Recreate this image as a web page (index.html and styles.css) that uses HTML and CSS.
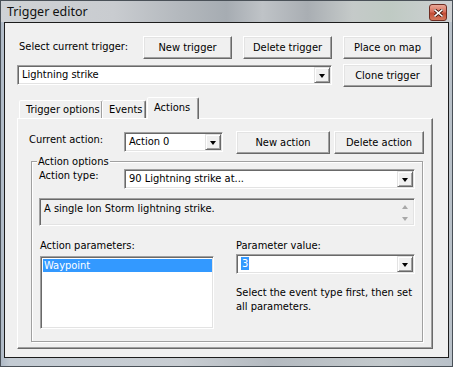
FILE: index.html
```html
<!DOCTYPE html>
<html lang="en">
<head>
  <meta charset="UTF-8" />
  <title>Trigger editor</title>
  <link rel="stylesheet" href="styles.css">
</head>
<body>
  <div class="window">
    <!-- Title bar -->
    <div class="titlebar">
      <span class="title">Trigger editor</span>
      <span class="close">
        <svg width="9" height="8" viewBox="0 0 9 8"><path d="M1 1 L8 7 M8 1 L1 7" stroke="#3a1208" stroke-width="3.2" stroke-linecap="square"/><path d="M1 1 L8 7 M8 1 L1 7" stroke="#fff" stroke-width="1.6" stroke-linecap="square"/></svg>
      </span>
    </div>

    <div class="client">
      <!-- Trigger selection -->
      <div class="row row-top">
        <span class="label label-trigger">Select current trigger:</span>
        <button class="btn">New trigger</button>
        <button class="btn">Delete trigger</button>
        <button class="btn">Place on map</button>
      </div>
      <div class="row row-second">
        <div class="combo combo-trigger">
          <span class="combo-text">Lightning strike</span>
          <span class="combo-arrow"></span>
        </div>
        <button class="btn">Clone trigger</button>
      </div>

      <!-- Tabs -->
      <div class="tabs">
        <span class="tab tab-first">Trigger options</span>
        <span class="tab tab-events">Events</span>
        <span class="tab tab-active">Actions</span>
      </div>
      <div class="panel">
        <div class="row row-action">
          <span class="label label-action">Current action:</span>
          <div class="combo combo-action">
            <span class="combo-text">Action 0</span>
            <span class="combo-arrow"></span>
          </div>
          <button class="btn btn-new-action">New action</button>
          <button class="btn btn-delete-action">Delete action</button>
        </div>

        <fieldset class="group">
          <legend>Action options</legend>
          <div class="row row-type">
            <span class="label label-type">Action type:</span>
            <div class="combo combo-type">
              <span class="combo-text">90 Lightning strike at...</span>
              <span class="combo-arrow"></span>
            </div>
          </div>
          <div class="description">
            <span class="description-text">A single Ion Storm lightning strike.</span>
            <span class="scroll">
              <span class="scroll-up"></span>
              <span class="scroll-down"></span>
            </span>
          </div>
          <div class="params">
            <div class="params-left">
              <span class="label">Action parameters:</span>
              <ul class="listbox">
                <li class="selected">Waypoint</li>
              </ul>
            </div>
            <div class="params-right">
              <span class="label">Parameter value:</span>
              <div class="combo combo-value">
                <span class="combo-text"><span class="highlight">3</span></span>
                <span class="combo-arrow"></span>
              </div>
              <p class="hint">Select the event type first, then set all parameters.</p>
            </div>
          </div>
        </fieldset>
      </div>
    </div>
  </div>
</body>
</html>
```

FILE: styles.css
```css
/* Window frame */
body {
  margin: 0;
  font-family: 'DejaVu Sans', sans-serif;
  font-stretch: condensed;
  font-size: 11px;
  color: #000;
  background: #b8c0c8;
}
.window {
  width: 453px;
  height: 367px;
  box-sizing: border-box;
  border: 1px solid #4a5158;
  display: flex;
  flex-direction: column;
  background: linear-gradient(90deg, #aeb9c6 0%, #c3cbd3 2%, #c8cdd2 40%, #b4bac0 60%, #c4cacd 85%, #b9c1c9 100%);
}
.titlebar {
  height: 21px;
  display: flex;
  align-items: flex-start;
  padding: 0 5px 0 6px;
  background: linear-gradient(90deg, #cfd2d5 0%, #c9ccd0 25%, #b3b8bd 40%, #a6acb2 50%, #bfc3c7 58%, #a9aeb3 68%, #c5cac9 78%, #bfcac3 86%, #cdd0d3 100%);
}
.title {
  font-family: 'Noto Sans', sans-serif;
  font-stretch: normal;
  font-size: 12.5px;
  line-height: 20px;
  padding-top: 1px;
  color: #111;
}
.close {
  margin-left: auto;
  margin-top: 3px;
  width: 16px;
  height: 15px;
  border: 1px solid #6e2c22;
  border-radius: 3px;
  background: linear-gradient(180deg, #e8a898 0%, #d8705c 45%, #c24c34 55%, #d47a5e 100%);
  display: flex;
  align-items: center;
  justify-content: center;
}

/* Client area */
.client {
  margin: 0 3px;
  height: 336px;
  box-sizing: border-box;
  border: 1px solid #1c1c1c;
  background: #f0f0f0;
  padding: 13px 0 0 12px;
}
.row {
  display: flex;
  align-items: flex-start;
}
.label {
  display: block;
  line-height: 13px;
}
.label-trigger {
  width: 124px;
  padding: 4px 0 0 2px;
}

/* Classic 3D controls */
.btn {
  font: inherit;
  color: #000;
  height: 23px;
  padding: 0;
  background: #f0f0f0;
  border: 1px solid;
  border-color: #fff #696969 #696969 #fff;
  box-shadow: inset -1px -1px 0 #a0a0a0, inset 1px 1px 0 #e3e3e3;
  width: 89px;
  margin-left: 11px;
}
.row-top .btn:first-of-type {
  margin-left: 0;
}
.row-second {
  margin-top: 5px;
}
.combo {
  height: 20px;
  box-sizing: border-box;
  display: flex;
  align-items: center;
  justify-content: space-between;
  background: #fff;
  border: 1px solid;
  border-color: #a0a0a0 #fff #fff #a0a0a0;
  box-shadow: inset 1px 1px 0 #696969, inset -1px -1px 0 #e3e3e3;
  padding: 1px 1px 1px 2px;
}
.combo-text {
  padding-left: 2px;
  line-height: 14px;
}
.combo-arrow {
  width: 16px;
  height: 16px;
  box-sizing: border-box;
  background: #f0f0f0;
  border: 1px solid;
  border-color: #e3e3e3 #696969 #696969 #e3e3e3;
  box-shadow: inset 1px 1px 0 #fff, inset -1px -1px 0 #a0a0a0;
  display: flex;
  align-items: center;
  justify-content: center;
}
.combo-arrow::after {
  content: '';
  border-left: 3.5px solid transparent;
  border-right: 3.5px solid transparent;
  border-top: 4px solid #000;
  margin-top: 1px;
}
.combo-trigger {
  width: 315px;
  margin-top: 1px;
}

/* Tabs */
.tabs {
  display: flex;
  align-items: flex-end;
  height: 21px;
  margin-top: 10px;
  padding-left: 2px;
  position: relative;
  z-index: 1;
}
.tab {
  height: 18px;
  box-sizing: border-box;
  line-height: 14px;
  padding: 2px 0 0 6px;
  background: #f0f0f0;
  border: 1px solid;
  border-bottom: none;
  border-color: #fff #696969 transparent #fff;
  border-radius: 2px 2px 0 0;
  box-shadow: inset -1px 0 0 #a0a0a0;
}
.tab-first {
  width: 84px;
}
.tab-events {
  width: 44px;
  margin-left: -1px;
}
.tab-active {
  width: 52px;
  height: 22px;
  margin-left: 1px;
  margin-bottom: -1px;
  padding-top: 3px;
}
.panel {
  width: 416px;
  height: 231px;
  box-sizing: border-box;
  border: 1px solid;
  border-color: #fff #696969 #696969 #fff;
  box-shadow: inset -1px -1px 0 #a0a0a0;
  padding: 12px 0 0 11px;
}
.label-action {
  width: 95px;
  padding-top: 2px;
}
.combo-action {
  width: 99px;
  margin-top: 1px;
}
.btn-new-action {
  width: 94px;
  margin-left: 13px;
}
.btn-delete-action {
  width: 90px;
  margin-left: 4px;
}

/* Group box */
.group {
  width: 392px;
  box-sizing: border-box;
  margin: 1px 0 0 2px;
  padding: 0 7px 12px 7px;
  border: 1px solid #a0a0a0;
  box-shadow: inset 1px 1px 0 #fff, 1px 1px 0 #fff;
}
.group legend {
  padding: 0 1px;
  margin-left: -2px;
  line-height: 13px;
  background: #f0f0f0;
}
.row-type {
  margin-top: 1px;
}
.label-type {
  width: 85px;
  padding-top: 0;
}
.combo-type {
  width: 291px;
}
.description {
  margin-top: 9px;
  width: 376px;
  height: 28px;
  box-sizing: border-box;
  display: flex;
  justify-content: space-between;
  border: 1px solid;
  border-color: #a0a0a0 #fff #fff #a0a0a0;
  box-shadow: inset 1px 1px 0 #696969, inset -1px -1px 0 #e3e3e3;
  padding: 3px 6px 0 4px;
}
.description-text {
  line-height: 14px;
}
.scroll {
  display: flex;
  flex-direction: column;
  justify-content: space-between;
  padding: 3px 0 4px;
}
.scroll-up {
  border-left: 3.5px solid transparent;
  border-right: 3.5px solid transparent;
  border-bottom: 4px solid #a8a8a8;
}
.scroll-down {
  border-left: 3.5px solid transparent;
  border-right: 3.5px solid transparent;
  border-top: 4px solid #a8a8a8;
}

/* Parameters */
.params {
  display: flex;
  margin-top: 13px;
}
.params-left {
  width: 175px;
}
.params-left .label {
  padding-left: 1px;
}
.listbox {
  list-style: none;
  margin: 4px 0 0 1px;
  width: 174px;
  height: 73px;
  box-sizing: border-box;
  background: #fff;
  border: 1px solid;
  border-color: #a0a0a0 #fff #fff #a0a0a0;
  box-shadow: inset 1px 1px 0 #696969, inset -1px -1px 0 #e3e3e3;
  padding: 2px 1px 0 2px;
}
.listbox li {
  line-height: 13px;
  padding-left: 1px;
}
.listbox .selected {
  background: #3399ff;
  color: #fff;
}
.params-right {
  margin-left: 22px;
  width: 179px;
}
.combo-value {
  width: 179px;
  margin-top: 2px;
}
.highlight {
  background: #3399ff;
  color: #fff;
  padding: 0 1px;
}
.hint {
  margin: 12px 0 0;
  line-height: 14px;
}
```
